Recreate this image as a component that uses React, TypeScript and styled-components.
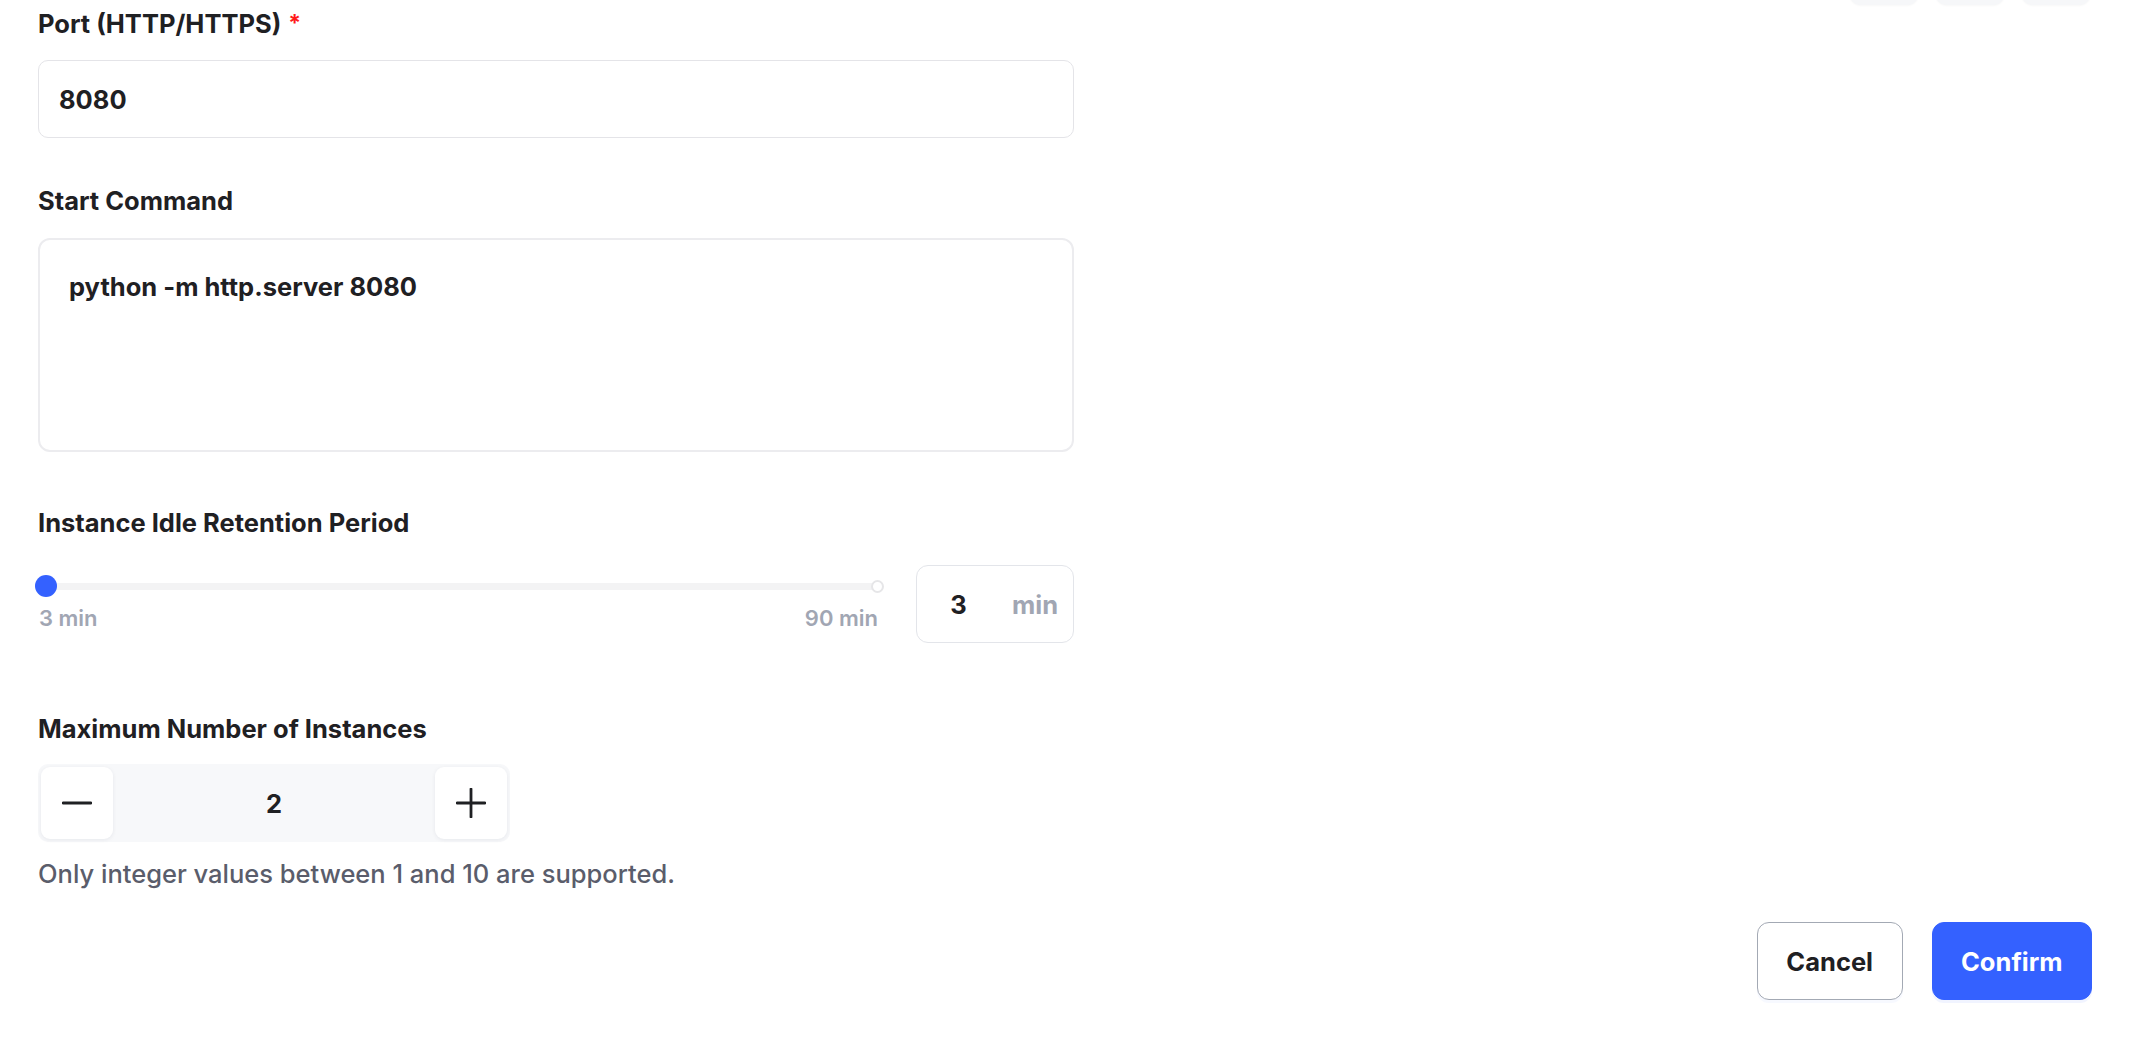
import React from "react";
import styled, { createGlobalStyle } from "styled-components";

const GlobalStyle = createGlobalStyle`
  html, body {
    margin: 0;
    padding: 0;
    background: #ffffff;
  }
  body {
    font-family: Inter, "Noto Sans", "Liberation Sans", sans-serif;
    color: #1f2023;
    overflow: hidden;
  }
  * { box-sizing: border-box; }
`;

const Page = styled.div`
  display: flex;
  flex-direction: column;
  padding: 0 46px 0 38px;
  width: 2138px;
  min-height: 1054px;
`;

const TopBar = styled.div`
  display: flex;
  justify-content: flex-end;
  gap: 16px;
  margin-top: -35px;
  margin-right: 1px;
`;

const Chip = styled.div`
  width: 70px;
  height: 40px;
  border-radius: 12px;
  background: #f6f7f9;
  box-shadow: 0 1px 2px rgba(0, 0, 0, 0.03);
`;

const Form = styled.div`
  display: flex;
  flex-direction: column;
  width: 1036px;
`;

const Field = styled.div<{ $mt: number; $gap: number }>`
  display: flex;
  flex-direction: column;
  gap: ${(p) => p.$gap}px;
  margin-top: ${(p) => p.$mt}px;
`;

const Label = styled.label`
  font-size: 25.5px;
  line-height: 32px;
  font-weight: 700;
  color: #1f2023;
`;

const Required = styled.span`
  color: #ff1a1a;
  margin-left: 7px;
  font-size: 23px;
  vertical-align: 2px;
`;

const TextInput = styled.input`
  height: 78px;
  width: 100%;
  border: 1px solid #e4e4e8;
  border-radius: 10px;
  padding: 0 20px;
  font-family: inherit;
  font-size: 25.5px;
  font-weight: 700;
  color: #1f2023;
  background: #fff;
  outline: none;
`;

const TextArea = styled.textarea`
  height: 214px;
  width: 100%;
  border: 2px solid #ececef;
  border-radius: 12px;
  padding: 32px 29px;
  font-family: inherit;
  font-size: 25.5px;
  line-height: 30px;
  font-weight: 700;
  color: #1f2023;
  resize: none;
  outline: none;
  background: #fff;
`;

const SliderRow = styled.div`
  display: flex;
  align-items: flex-start;
  gap: 38px;
`;

const SliderCol = styled.div`
  flex: 0 0 840px;
  display: flex;
  flex-direction: column;
  gap: 7px;
  padding-top: 10px;
`;

const TrackArea = styled.div`
  position: relative;
  height: 22px;
  display: flex;
  align-items: center;
  padding-left: 8px;
`;

const Rail = styled.div`
  position: relative;
  flex: 1;
  height: 7px;
  border-radius: 4px;
  background: #f3f3f4;
`;

const Thumb = styled.div`
  position: absolute;
  left: -11px;
  top: 50%;
  width: 22px;
  height: 22px;
  margin-top: -11px;
  border-radius: 50%;
  background: #3461ff;
`;

const EndDot = styled.div`
  position: absolute;
  right: -6px;
  top: 50%;
  width: 13px;
  height: 13px;
  margin-top: -6.5px;
  border-radius: 50%;
  background: #fff;
  border: 2px solid #e6e6e8;
`;

const RangeLabels = styled.div`
  display: flex;
  justify-content: space-between;
  font-size: 22px;
  line-height: 28px;
  font-weight: 600;
  color: #a1a6b3;
  padding-left: 1px;
`;

const NumberBox = styled.div`
  flex: 0 0 157px;
  height: 78px;
  display: flex;
  align-items: center;
  gap: 12px;
  padding-right: 15px;
  border: 1px solid #e3e5ea;
  border-radius: 12px;
  background: #fff;
`;

const NumberInput = styled.input`
  width: 83px;
  min-width: 0;
  border: none;
  outline: none;
  text-align: center;
  font-family: inherit;
  font-size: 25.5px;
  font-weight: 700;
  color: #1f2023;
  background: transparent;
  padding: 0;
`;

const Suffix = styled.span`
  font-size: 25.5px;
  font-weight: 700;
  color: #a1a6b3;
`;

const Stepper = styled.div`
  width: 472px;
  height: 78px;
  display: flex;
  align-items: center;
  padding: 3px;
  border-radius: 10px;
  background: #f7f8fa;
`;

const StepButton = styled.button`
  width: 72px;
  height: 72px;
  flex: 0 0 72px;
  display: flex;
  align-items: center;
  justify-content: center;
  border: none;
  border-radius: 9px;
  background: #fff;
  box-shadow: 0 1px 4px rgba(20, 30, 60, 0.07);
  cursor: pointer;
  padding: 0;
`;

const StepValue = styled.div`
  flex: 1;
  text-align: center;
  font-size: 25.5px;
  font-weight: 700;
  color: #1f2023;
`;

const Help = styled.p`
  margin: 16px 0 0;
  font-size: 25.5px;
  line-height: 32px;
  font-weight: 500;
  color: #5a5d6b;
`;

const Footer = styled.div`
  display: flex;
  justify-content: flex-end;
  gap: 29px;
  margin-top: 32px;
`;

const Button = styled.button<{ $primary?: boolean }>`
  height: 78px;
  padding: 0 28.5px;
  border-radius: 12px;
  font-family: inherit;
  font-size: 25.5px;
  font-weight: 700;
  cursor: pointer;
  border: 1px solid ${(p) => (p.$primary ? "#3461ff" : "#a3a9b4")};
  background: ${(p) => (p.$primary ? "#3461ff" : "#ffffff")};
  color: ${(p) => (p.$primary ? "#ffffff" : "#1f2023")};
  box-shadow: 0 3px 0 ${(p) => (p.$primary ? "rgba(52,97,255,0.07)" : "rgba(52,97,255,0.04)")};
`;

const MinusIcon = () => (
  <svg width="30" height="30" viewBox="0 0 30 30" fill="none">
    <path d="M1 15h28" stroke="#1f2023" strokeWidth="2.8" strokeLinecap="round" />
  </svg>
);

const PlusIcon = () => (
  <svg width="30" height="30" viewBox="0 0 30 30" fill="none">
    <path d="M1 15h28M15 1v28" stroke="#1f2023" strokeWidth="2.8" strokeLinecap="round" />
  </svg>
);

export default function App() {
  return (
    <>
      <GlobalStyle />
      <Page>
        <TopBar>
          <Chip />
          <Chip />
          <Chip />
        </TopBar>
        <Form>
          <Field $mt={2} $gap={20}>
            <Label>
              Port (HTTP/HTTPS)<Required>*</Required>
            </Label>
            <TextInput readOnly defaultValue="8080" />
          </Field>
          <Field $mt={47} $gap={21}>
            <Label>Start Command</Label>
            <TextArea readOnly defaultValue="python -m http.server 8080" />
          </Field>
          <Field $mt={55} $gap={26}>
            <Label>Instance Idle Retention Period</Label>
            <SliderRow>
              <SliderCol>
                <TrackArea>
                  <Rail>
                    <Thumb />
                    <EndDot />
                  </Rail>
                </TrackArea>
                <RangeLabels>
                  <span>3 min</span>
                  <span>90 min</span>
                </RangeLabels>
              </SliderCol>
              <NumberBox>
                <NumberInput readOnly defaultValue="3" />
                <Suffix>min</Suffix>
              </NumberBox>
            </SliderRow>
          </Field>
          <Field $mt={70} $gap={19}>
            <Label>Maximum Number of Instances</Label>
            <Stepper>
              <StepButton aria-label="decrease">
                <MinusIcon />
              </StepButton>
              <StepValue>2</StepValue>
              <StepButton aria-label="increase">
                <PlusIcon />
              </StepButton>
            </Stepper>
          </Field>
          <Help>Only integer values between 1 and 10 are supported.</Help>
        </Form>
        <Footer>
          <Button>Cancel</Button>
          <Button $primary>Confirm</Button>
        </Footer>
      </Page>
    </>
  );
}
